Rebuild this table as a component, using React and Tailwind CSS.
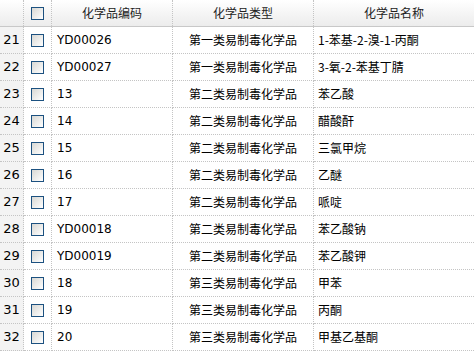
const rows = [
  [21, "YD00026", "第一类易制毒化学品", "1-苯基-2-溴-1-丙酮"],
  [22, "YD00027", "第一类易制毒化学品", "3-氧-2-苯基丁腈"],
  [23, "13", "第二类易制毒化学品", "苯乙酸"],
  [24, "14", "第二类易制毒化学品", "醋酸酐"],
  [25, "15", "第二类易制毒化学品", "三氯甲烷"],
  [26, "16", "第二类易制毒化学品", "乙醚"],
  [27, "17", "第二类易制毒化学品", "哌啶"],
  [28, "YD00018", "第二类易制毒化学品", "苯乙酸钠"],
  [29, "YD00019", "第二类易制毒化学品", "苯乙酸钾"],
  [30, "18", "第三类易制毒化学品", "甲苯"],
  [31, "19", "第三类易制毒化学品", "丙酮"],
  [32, "20", "第三类易制毒化学品", "甲基乙基酮"],
];

function Checkbox() {
  return (
    <span className="block w-[13px] h-[13px] border border-[#1c5180] bg-linear-to-br from-[#d8d8d4] to-white" />
  );
}

const cols = "grid grid-cols-[24px_28px_121px_141px_160px]";
const cjk = "font-['Noto_Sans_CJK_SC',sans-serif]";
const latin = "font-['DejaVu_Sans','Noto_Sans_CJK_SC',sans-serif]";

export default function App() {
  const hd =
    "h-[26px] flex items-center justify-center border-r border-dotted border-[#c4c4c4] text-[12px] text-[#222] " + cjk;
  const td =
    "h-[27px] flex items-center border-b border-r border-dotted border-[#c4c4c4] text-[12px] text-black";

  return (
    <div className="w-[474px] h-[352px] bg-white overflow-hidden">
      {/* header */}
      <div className={cols + " bg-linear-to-b from-white to-[#ececec] border-b border-[#c8c8c8]"}>
        <div className={hd} />
        <div className={hd}>
          <Checkbox />
        </div>
        <div className={hd}>化学品编码</div>
        <div className={hd}>化学品类型</div>
        <div className={hd + " border-r-0"}>化学品名称</div>
      </div>

      {/* body */}
      <div className={cols}>
        {rows.map(([n, code, type, name]) => (
          <div key={n} className="contents">
            <div className={td + " justify-center bg-[#f3f3f3] text-[13px] " + latin}>{n}</div>
            <div className={td + " justify-center"}>
              <Checkbox />
            </div>
            <div className={td + " pl-[5px] text-[11.5px] " + latin}>{code}</div>
            <div className={td + " justify-center " + cjk}>{type}</div>
            <div className={td + " pl-[4px] border-r-0 " + cjk}>{name}</div>
          </div>
        ))}
      </div>
    </div>
  );
}
